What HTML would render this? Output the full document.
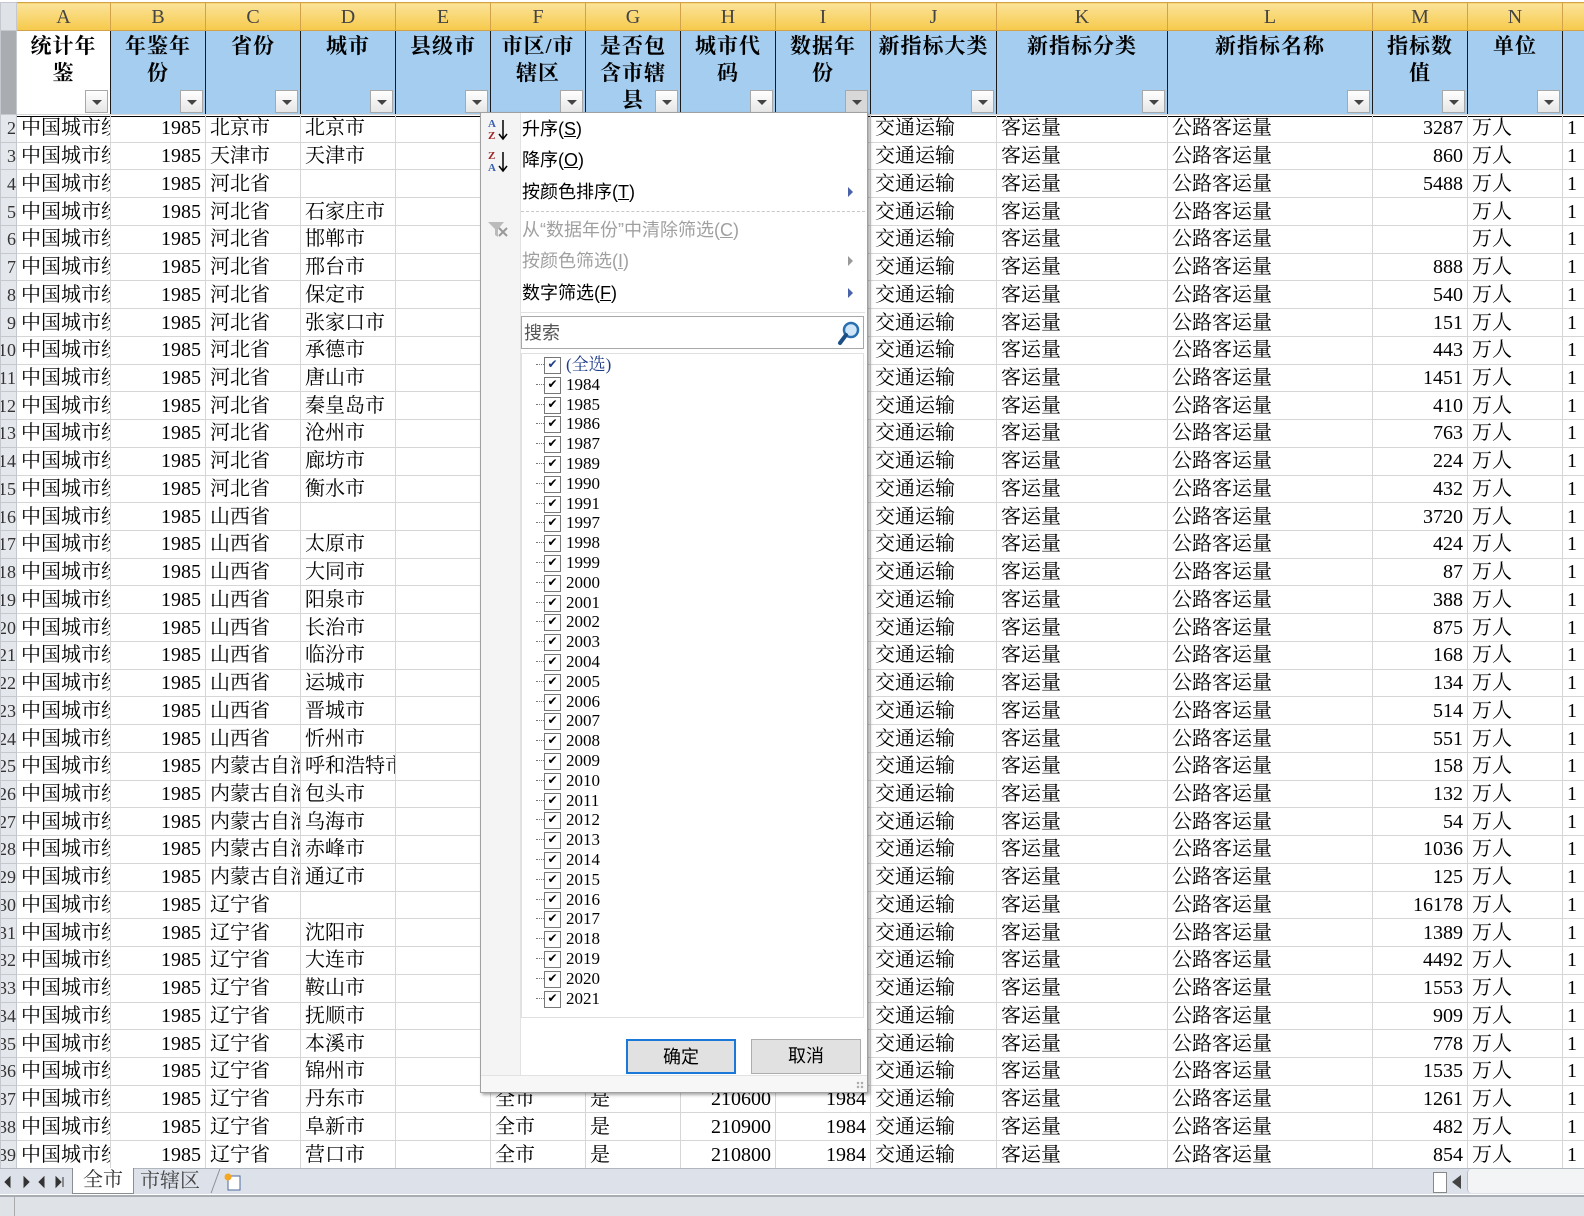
<!DOCTYPE html>
<html><head><meta charset="utf-8"><style>
*{margin:0;padding:0;box-sizing:border-box}
body{width:1584px;height:1216px;overflow:hidden;background:#fff;position:relative;font-family:"Liberation Serif","Noto Serif CJK SC",serif;color:#000}
table{border-collapse:collapse;table-layout:fixed;position:absolute;left:0;width:1602px}
td,th{overflow:hidden;white-space:nowrap;font-weight:normal}
#hd{top:2px}
#hd .cl td{height:28px;background:linear-gradient(#fbe39a,#f6c94a);border:1px solid #d1a24a;text-align:center;font-size:20px;color:#444;line-height:26px}
#hd .cl td.rh{background:#dfe3e8;border-color:#c5c9cf}
#hd .hr td{height:82px;background:#a4cdef;border:1px solid #1a1a1a;border-bottom:3px double #000;vertical-align:top;text-align:center;font-weight:bold;font-size:21px;line-height:27px;position:relative;white-space:normal;padding-top:2px;letter-spacing:1px}
#hd .hr td.rh{background:#a9acb0;border-color:#c5c9cf}
.fb{position:absolute;right:2px;bottom:1px;width:23px;height:23px;background:linear-gradient(#fff,#e6e6e6);border:1px solid #a8a8a8}
.fb:after{content:"";position:absolute;left:6px;top:9px;border-left:5px solid transparent;border-right:5px solid transparent;border-top:5px solid #444}
#dt{top:114px}
#dt td{height:27.74px;border:1px solid #d6d6d6;font-size:20px;padding:0 4px;line-height:26px}
#dt td.r{text-align:right;padding-right:4px}
#dt td.rh{background:#e4e7ec;border-color:#c5c9cf;text-align:right;padding:0;font-size:18px;color:#333;text-indent:-6px}
#menu{position:absolute;left:480px;top:112px;width:388px;height:981px;background:#fff;border:1px solid #a0a0a0;box-shadow:2px 2px 3px rgba(0,0,0,.35);font-family:"Liberation Sans","Noto Sans CJK SC",sans-serif;font-size:18px}
#gut{position:absolute;left:0;top:0;width:40px;height:100%;background:#f4f4f4;border-right:1px solid #e2e2e2}
.mi{position:absolute;left:41px;line-height:20px}
.dis{color:#a0a0a0}
.arr{position:absolute;left:367px;border-top:5px solid transparent;border-bottom:5px solid transparent;border-left:5px solid #4a62a8}
.sep{position:absolute;left:40px;width:344px;border-top:1px dashed #c8c8c8}
#srch{position:absolute;left:40px;top:203px;width:343px;height:33px;border:1px solid #a8a8a8;color:#555;padding:2px 0 0 2px;font-size:18px}
#list{position:absolute;left:40px;top:240px;width:343px;height:665px;border:1px solid #e0e0e0;padding-top:1px}
.it{height:19.8px;position:relative;padding-left:44px;font-family:"Liberation Serif","Noto Serif CJK SC",serif;font-size:17px;line-height:19px}
.it:before{content:"";position:absolute;left:14px;top:9px;width:8px;border-top:1px dotted #777}
.it:after{content:"✔";position:absolute;left:22px;top:2px;width:15px;height:15px;border:1px solid #777;font-size:12px;line-height:13px;text-align:center;font-family:"DejaVu Sans",sans-serif}
#vl{position:absolute;left:54px;top:252px;height:641px;border-left:1px dotted #777}
.btn{position:absolute;top:926px;width:110px;height:35px;background:#e1e1e1;border:1px solid #adadad;text-align:center;line-height:33px;font-size:18px}
#tabs{position:absolute;left:0;top:1168px;width:1584px;height:26px;background:#dde2ea;border-top:1px solid #b0b6be}
#stat{position:absolute;left:0;top:1195px;width:1584px;height:21px;background:#dfe2e7;border-top:2px solid #a8adb4}
</style></head><body>

<table id="hd"><colgroup><col style="width:16px"><col style="width:94px"><col style="width:95px"><col style="width:95px"><col style="width:95px"><col style="width:95px"><col style="width:95px"><col style="width:95px"><col style="width:95px"><col style="width:95px"><col style="width:126px"><col style="width:171px"><col style="width:205px"><col style="width:95px"><col style="width:95px"><col style="width:40px"></colgroup>
<tr class="cl"><td class="rh"></td><td>A</td><td>B</td><td>C</td><td>D</td><td>E</td><td>F</td><td>G</td><td>H</td><td>I</td><td>J</td><td>K</td><td>L</td><td>M</td><td>N</td><td></td></tr>
<tr class="hr"><td class="rh"></td><td style="background:#fff">统计年<br>鉴<span class="fb"></span></td><td>年鉴年<br>份<span class="fb"></span></td><td>省份<span class="fb"></span></td><td>城市<span class="fb"></span></td><td>县级市<span class="fb"></span></td><td>市区/市<br>辖区<span class="fb"></span></td><td>是否包<br>含市辖<br>县<span class="fb"></span></td><td>城市代<br>码<span class="fb"></span></td><td>数据年<br>份<span class="fb" style="background:#d8d8d8"></span></td><td>新指标大类<span class="fb"></span></td><td>新指标分类<span class="fb"></span></td><td>新指标名称<span class="fb"></span></td><td>指标数<br>值<span class="fb"></span></td><td>单位<span class="fb"></span></td><td></td></tr>
</table>

<table id="dt"><colgroup><col style="width:16px"><col style="width:94px"><col style="width:95px"><col style="width:95px"><col style="width:95px"><col style="width:95px"><col style="width:95px"><col style="width:95px"><col style="width:95px"><col style="width:95px"><col style="width:126px"><col style="width:171px"><col style="width:205px"><col style="width:95px"><col style="width:95px"><col style="width:40px"></colgroup>
<tr><td class="rh">2</td><td>中国城市统计</td><td class="r">1985</td><td>北京市</td><td>北京市</td><td></td><td></td><td></td><td></td><td></td><td>交通运输</td><td>客运量</td><td>公路客运量</td><td class="r">3287</td><td>万人</td><td>1</td></tr>
<tr><td class="rh">3</td><td>中国城市统计</td><td class="r">1985</td><td>天津市</td><td>天津市</td><td></td><td></td><td></td><td></td><td></td><td>交通运输</td><td>客运量</td><td>公路客运量</td><td class="r">860</td><td>万人</td><td>1</td></tr>
<tr><td class="rh">4</td><td>中国城市统计</td><td class="r">1985</td><td>河北省</td><td></td><td></td><td></td><td></td><td></td><td></td><td>交通运输</td><td>客运量</td><td>公路客运量</td><td class="r">5488</td><td>万人</td><td>1</td></tr>
<tr><td class="rh">5</td><td>中国城市统计</td><td class="r">1985</td><td>河北省</td><td>石家庄市</td><td></td><td></td><td></td><td></td><td></td><td>交通运输</td><td>客运量</td><td>公路客运量</td><td class="r"></td><td>万人</td><td>1</td></tr>
<tr><td class="rh">6</td><td>中国城市统计</td><td class="r">1985</td><td>河北省</td><td>邯郸市</td><td></td><td></td><td></td><td></td><td></td><td>交通运输</td><td>客运量</td><td>公路客运量</td><td class="r"></td><td>万人</td><td>1</td></tr>
<tr><td class="rh">7</td><td>中国城市统计</td><td class="r">1985</td><td>河北省</td><td>邢台市</td><td></td><td></td><td></td><td></td><td></td><td>交通运输</td><td>客运量</td><td>公路客运量</td><td class="r">888</td><td>万人</td><td>1</td></tr>
<tr><td class="rh">8</td><td>中国城市统计</td><td class="r">1985</td><td>河北省</td><td>保定市</td><td></td><td></td><td></td><td></td><td></td><td>交通运输</td><td>客运量</td><td>公路客运量</td><td class="r">540</td><td>万人</td><td>1</td></tr>
<tr><td class="rh">9</td><td>中国城市统计</td><td class="r">1985</td><td>河北省</td><td>张家口市</td><td></td><td></td><td></td><td></td><td></td><td>交通运输</td><td>客运量</td><td>公路客运量</td><td class="r">151</td><td>万人</td><td>1</td></tr>
<tr><td class="rh">10</td><td>中国城市统计</td><td class="r">1985</td><td>河北省</td><td>承德市</td><td></td><td></td><td></td><td></td><td></td><td>交通运输</td><td>客运量</td><td>公路客运量</td><td class="r">443</td><td>万人</td><td>1</td></tr>
<tr><td class="rh">11</td><td>中国城市统计</td><td class="r">1985</td><td>河北省</td><td>唐山市</td><td></td><td></td><td></td><td></td><td></td><td>交通运输</td><td>客运量</td><td>公路客运量</td><td class="r">1451</td><td>万人</td><td>1</td></tr>
<tr><td class="rh">12</td><td>中国城市统计</td><td class="r">1985</td><td>河北省</td><td>秦皇岛市</td><td></td><td></td><td></td><td></td><td></td><td>交通运输</td><td>客运量</td><td>公路客运量</td><td class="r">410</td><td>万人</td><td>1</td></tr>
<tr><td class="rh">13</td><td>中国城市统计</td><td class="r">1985</td><td>河北省</td><td>沧州市</td><td></td><td></td><td></td><td></td><td></td><td>交通运输</td><td>客运量</td><td>公路客运量</td><td class="r">763</td><td>万人</td><td>1</td></tr>
<tr><td class="rh">14</td><td>中国城市统计</td><td class="r">1985</td><td>河北省</td><td>廊坊市</td><td></td><td></td><td></td><td></td><td></td><td>交通运输</td><td>客运量</td><td>公路客运量</td><td class="r">224</td><td>万人</td><td>1</td></tr>
<tr><td class="rh">15</td><td>中国城市统计</td><td class="r">1985</td><td>河北省</td><td>衡水市</td><td></td><td></td><td></td><td></td><td></td><td>交通运输</td><td>客运量</td><td>公路客运量</td><td class="r">432</td><td>万人</td><td>1</td></tr>
<tr><td class="rh">16</td><td>中国城市统计</td><td class="r">1985</td><td>山西省</td><td></td><td></td><td></td><td></td><td></td><td></td><td>交通运输</td><td>客运量</td><td>公路客运量</td><td class="r">3720</td><td>万人</td><td>1</td></tr>
<tr><td class="rh">17</td><td>中国城市统计</td><td class="r">1985</td><td>山西省</td><td>太原市</td><td></td><td></td><td></td><td></td><td></td><td>交通运输</td><td>客运量</td><td>公路客运量</td><td class="r">424</td><td>万人</td><td>1</td></tr>
<tr><td class="rh">18</td><td>中国城市统计</td><td class="r">1985</td><td>山西省</td><td>大同市</td><td></td><td></td><td></td><td></td><td></td><td>交通运输</td><td>客运量</td><td>公路客运量</td><td class="r">87</td><td>万人</td><td>1</td></tr>
<tr><td class="rh">19</td><td>中国城市统计</td><td class="r">1985</td><td>山西省</td><td>阳泉市</td><td></td><td></td><td></td><td></td><td></td><td>交通运输</td><td>客运量</td><td>公路客运量</td><td class="r">388</td><td>万人</td><td>1</td></tr>
<tr><td class="rh">20</td><td>中国城市统计</td><td class="r">1985</td><td>山西省</td><td>长治市</td><td></td><td></td><td></td><td></td><td></td><td>交通运输</td><td>客运量</td><td>公路客运量</td><td class="r">875</td><td>万人</td><td>1</td></tr>
<tr><td class="rh">21</td><td>中国城市统计</td><td class="r">1985</td><td>山西省</td><td>临汾市</td><td></td><td></td><td></td><td></td><td></td><td>交通运输</td><td>客运量</td><td>公路客运量</td><td class="r">168</td><td>万人</td><td>1</td></tr>
<tr><td class="rh">22</td><td>中国城市统计</td><td class="r">1985</td><td>山西省</td><td>运城市</td><td></td><td></td><td></td><td></td><td></td><td>交通运输</td><td>客运量</td><td>公路客运量</td><td class="r">134</td><td>万人</td><td>1</td></tr>
<tr><td class="rh">23</td><td>中国城市统计</td><td class="r">1985</td><td>山西省</td><td>晋城市</td><td></td><td></td><td></td><td></td><td></td><td>交通运输</td><td>客运量</td><td>公路客运量</td><td class="r">514</td><td>万人</td><td>1</td></tr>
<tr><td class="rh">24</td><td>中国城市统计</td><td class="r">1985</td><td>山西省</td><td>忻州市</td><td></td><td></td><td></td><td></td><td></td><td>交通运输</td><td>客运量</td><td>公路客运量</td><td class="r">551</td><td>万人</td><td>1</td></tr>
<tr><td class="rh">25</td><td>中国城市统计</td><td class="r">1985</td><td>内蒙古自治区</td><td>呼和浩特市</td><td></td><td></td><td></td><td></td><td></td><td>交通运输</td><td>客运量</td><td>公路客运量</td><td class="r">158</td><td>万人</td><td>1</td></tr>
<tr><td class="rh">26</td><td>中国城市统计</td><td class="r">1985</td><td>内蒙古自治区</td><td>包头市</td><td></td><td></td><td></td><td></td><td></td><td>交通运输</td><td>客运量</td><td>公路客运量</td><td class="r">132</td><td>万人</td><td>1</td></tr>
<tr><td class="rh">27</td><td>中国城市统计</td><td class="r">1985</td><td>内蒙古自治区</td><td>乌海市</td><td></td><td></td><td></td><td></td><td></td><td>交通运输</td><td>客运量</td><td>公路客运量</td><td class="r">54</td><td>万人</td><td>1</td></tr>
<tr><td class="rh">28</td><td>中国城市统计</td><td class="r">1985</td><td>内蒙古自治区</td><td>赤峰市</td><td></td><td></td><td></td><td></td><td></td><td>交通运输</td><td>客运量</td><td>公路客运量</td><td class="r">1036</td><td>万人</td><td>1</td></tr>
<tr><td class="rh">29</td><td>中国城市统计</td><td class="r">1985</td><td>内蒙古自治区</td><td>通辽市</td><td></td><td></td><td></td><td></td><td></td><td>交通运输</td><td>客运量</td><td>公路客运量</td><td class="r">125</td><td>万人</td><td>1</td></tr>
<tr><td class="rh">30</td><td>中国城市统计</td><td class="r">1985</td><td>辽宁省</td><td></td><td></td><td></td><td></td><td></td><td></td><td>交通运输</td><td>客运量</td><td>公路客运量</td><td class="r">16178</td><td>万人</td><td>1</td></tr>
<tr><td class="rh">31</td><td>中国城市统计</td><td class="r">1985</td><td>辽宁省</td><td>沈阳市</td><td></td><td></td><td></td><td></td><td></td><td>交通运输</td><td>客运量</td><td>公路客运量</td><td class="r">1389</td><td>万人</td><td>1</td></tr>
<tr><td class="rh">32</td><td>中国城市统计</td><td class="r">1985</td><td>辽宁省</td><td>大连市</td><td></td><td></td><td></td><td></td><td></td><td>交通运输</td><td>客运量</td><td>公路客运量</td><td class="r">4492</td><td>万人</td><td>1</td></tr>
<tr><td class="rh">33</td><td>中国城市统计</td><td class="r">1985</td><td>辽宁省</td><td>鞍山市</td><td></td><td></td><td></td><td></td><td></td><td>交通运输</td><td>客运量</td><td>公路客运量</td><td class="r">1553</td><td>万人</td><td>1</td></tr>
<tr><td class="rh">34</td><td>中国城市统计</td><td class="r">1985</td><td>辽宁省</td><td>抚顺市</td><td></td><td></td><td></td><td></td><td></td><td>交通运输</td><td>客运量</td><td>公路客运量</td><td class="r">909</td><td>万人</td><td>1</td></tr>
<tr><td class="rh">35</td><td>中国城市统计</td><td class="r">1985</td><td>辽宁省</td><td>本溪市</td><td></td><td></td><td></td><td></td><td></td><td>交通运输</td><td>客运量</td><td>公路客运量</td><td class="r">778</td><td>万人</td><td>1</td></tr>
<tr><td class="rh">36</td><td>中国城市统计</td><td class="r">1985</td><td>辽宁省</td><td>锦州市</td><td></td><td></td><td></td><td></td><td></td><td>交通运输</td><td>客运量</td><td>公路客运量</td><td class="r">1535</td><td>万人</td><td>1</td></tr>
<tr><td class="rh">37</td><td>中国城市统计</td><td class="r">1985</td><td>辽宁省</td><td>丹东市</td><td></td><td>全市</td><td>是</td><td class="r">210600</td><td class="r">1984</td><td>交通运输</td><td>客运量</td><td>公路客运量</td><td class="r">1261</td><td>万人</td><td>1</td></tr>
<tr><td class="rh">38</td><td>中国城市统计</td><td class="r">1985</td><td>辽宁省</td><td>阜新市</td><td></td><td>全市</td><td>是</td><td class="r">210900</td><td class="r">1984</td><td>交通运输</td><td>客运量</td><td>公路客运量</td><td class="r">482</td><td>万人</td><td>1</td></tr>
<tr><td class="rh">39</td><td>中国城市统计</td><td class="r">1985</td><td>辽宁省</td><td>营口市</td><td></td><td>全市</td><td>是</td><td class="r">210800</td><td class="r">1984</td><td>交通运输</td><td>客运量</td><td>公路客运量</td><td class="r">854</td><td>万人</td><td>1</td></tr>
</table>

<div id="menu">
 <div id="gut"></div>
 <svg style="position:absolute;left:5px;top:4px" width="26" height="56" viewBox="0 0 26 56">
  <text x="2" y="10" font-size="11" fill="#3b5fb0" font-family="Liberation Serif" font-weight="bold">A</text>
  <text x="2" y="22" font-size="11" fill="#a02828" font-family="Liberation Serif" font-weight="bold">Z</text>
  <path d="M17 3V21M13 17L17 22L21 17" stroke="#000" stroke-width="1.5" fill="none"/>
  <text x="2" y="42" font-size="11" fill="#a02828" font-family="Liberation Serif" font-weight="bold">Z</text>
  <text x="2" y="54" font-size="11" fill="#3b5fb0" font-family="Liberation Serif" font-weight="bold">A</text>
  <path d="M17 35V53M13 49L17 54L21 49" stroke="#000" stroke-width="1.5" fill="none"/>
 </svg>
 <svg style="position:absolute;left:6px;top:107px" width="22" height="20"><path d="M1 2H17L11 9V17L8 15V9Z" fill="#bbb"/><path d="M12 8L20 16M20 8L12 16" stroke="#999" stroke-width="2"/></svg>
 <div class="mi" style="top:6px">升序(<u>S</u>)</div>
 <div class="mi" style="top:37px">降序(<u>O</u>)</div>
 <div class="mi" style="top:69px">按颜色排序(<u>T</u>)</div><div class="arr" style="top:74px"></div>
 <div class="sep" style="top:98px"></div>
 <div class="mi dis" style="top:107px">从“数据年份”中清除筛选(<u>C</u>)</div>
 <div class="mi dis" style="top:138px">按颜色筛选(<u>I</u>)</div><div class="arr" style="top:143px;border-left-color:#999"></div>
 <div class="mi" style="top:170px">数字筛选(<u>F</u>)</div><div class="arr" style="top:175px"></div>
 <div class="sep" style="top:199px;border-top-style:solid;border-color:#e0e0e0"></div>
 <div id="srch">搜索<svg style="position:absolute;right:2px;top:3px" width="24" height="26"><circle cx="14" cy="10" r="7" fill="#cfe6f8" stroke="#2a6fb0" stroke-width="2.5"/><path d="M9 15L3 23" stroke="#1d4f85" stroke-width="4" stroke-linecap="round"/></svg></div>
 <div id="list">
  <div class="it" style="color:#1f3c88">(全选)</div>
  <div class="it">1984</div><div class="it">1985</div><div class="it">1986</div><div class="it">1987</div><div class="it">1989</div><div class="it">1990</div><div class="it">1991</div><div class="it">1997</div><div class="it">1998</div><div class="it">1999</div><div class="it">2000</div><div class="it">2001</div><div class="it">2002</div><div class="it">2003</div><div class="it">2004</div><div class="it">2005</div><div class="it">2006</div><div class="it">2007</div><div class="it">2008</div><div class="it">2009</div><div class="it">2010</div><div class="it">2011</div><div class="it">2012</div><div class="it">2013</div><div class="it">2014</div><div class="it">2015</div><div class="it">2016</div><div class="it">2017</div><div class="it">2018</div><div class="it">2019</div><div class="it">2020</div><div class="it">2021</div>
 </div>
 <div class="btn" style="left:145px;border:2px solid #1a78d8">确定</div>
 <div class="btn" style="left:270px">取消</div>
 <div style="position:absolute;left:0;top:962px;width:386px;height:17px;background:#f7f7f7;border-top:1px solid #e2e2e2"></div>
 <div style="position:absolute;right:3px;bottom:3px;width:8px;height:8px;background:radial-gradient(circle,#aaa 1px,transparent 1.5px) 0 0/4px 4px"></div>
</div>

<div id="tabs">
 <svg style="position:absolute;left:2px;top:6px" width="66" height="14"><path d="M8 2L3 7L8 12Z M22 2L27 7L22 12Z M42 2L37 7L42 12Z M54 2L59 7L54 12Z M61 2V12" fill="#333" stroke="#333"/></svg>
 <div style="position:absolute;left:72px;top:-1px;width:62px;height:26px;background:#fff;border:1px solid #8a8f96;border-top:none;text-align:center;font-size:20px;line-height:24px;color:#333">全市</div>
 <div style="position:absolute;left:140px;top:1px;font-size:20px;line-height:22px;color:#444">市辖区</div>
 <div style="position:absolute;left:215px;top:0;width:1px;height:24px;background:#8a8f96;transform:skewX(-20deg)"></div>
 <svg style="position:absolute;left:222px;top:3px" width="22" height="20"><rect x="6" y="4" width="12" height="14" fill="#fff" stroke="#4b6a9a"/><circle cx="6" cy="5" r="3.5" fill="#f5a623"/></svg>
 <div style="position:absolute;left:1433px;top:3px;width:14px;height:21px;background:#fff;border:1px solid #888"></div>
 <svg style="position:absolute;left:1450px;top:5px" width="14" height="16"><path d="M11 1L2 8L11 15Z" fill="#444"/></svg>
 <div style="position:absolute;left:1467px;top:0;width:117px;height:24px;background:#f3f4f6;border-left:1px solid #b8bcc2;border-radius:4px 0 0 4px"></div>
</div>
<div id="stat"><div style="position:absolute;left:14px;top:0;width:1px;height:19px;background:#aaa"></div></div>
</body></html>
